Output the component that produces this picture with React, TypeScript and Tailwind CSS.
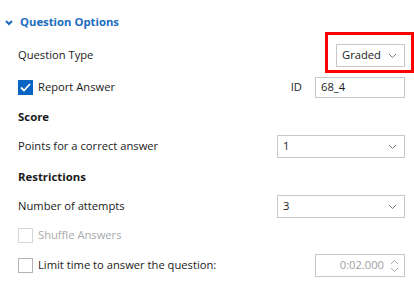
const font = { fontFamily: '"Open Sans", "Noto Sans", sans-serif' };

function SmallChevron() {
  return (
    <svg width="9" height="6" viewBox="0 0 9 6" className="text-[#777]">
      <path d="M1 1 L4.5 4.5 L8 1" fill="none" stroke="currentColor" strokeWidth="1" />
    </svg>
  );
}

function Select({ value, width }: { value: string; width: string }) {
  return (
    <div className={`${width} h-[23px] border border-[#c8c8c8] bg-white flex items-center justify-between pl-[5px] pr-[7px] text-[#1b1b1b]`}>
      <span>{value}</span>
      <SmallChevron />
    </div>
  );
}

function Check({ checked, disabled }: { checked?: boolean; disabled?: boolean }) {
  if (checked) {
    return (
      <div className="w-[15px] h-[15px] bg-[#0a64c2] flex items-center justify-center">
        <svg width="11" height="9" viewBox="0 0 11 9">
          <path d="M1 4.5 L4 7.5 L10 1" fill="none" stroke="white" strokeWidth="1.8" />
        </svg>
      </div>
    );
  }
  return (
    <div className={`w-[15px] h-[15px] border bg-white ${disabled ? "border-[#d6d6d6]" : "border-[#b4b4b4]"}`} />
  );
}

export default function App() {
  return (
    <div className="w-[414px] h-[302px] bg-white relative overflow-hidden" style={font}>
      {/* header */}
      <div className="h-[44px] flex items-center pl-[5px] pt-[1px]">
        <svg width="8" height="6" viewBox="0 0 8 6" className="text-[#1a6cc0] mr-[7px]">
          <path d="M1 1 L4 4 L7 1" fill="none" stroke="currentColor" strokeWidth="2" />
        </svg>
        <span className="text-[11.3px] font-bold text-[#1a6cc0]">Question Options</span>
      </div>

      <div className="pl-[18px] pr-[9px] text-[11.2px] text-[#1b1b1b]">
        <div className="h-[23px] flex items-center justify-between">
          <span>Question Type</span>
          <Select value="Graded" width="w-[69px]" />
        </div>

        <div className="h-[21px] mt-[10px] flex items-center justify-between">
          <div className="flex items-center gap-[5px]">
            <Check checked />
            <span>Report Answer</span>
          </div>
          <div className="flex items-center gap-[13px]">
            <span>ID</span>
            <div className="w-[90px] h-[21px] border border-[#c8c8c8] flex items-center pl-[5px]">68_4</div>
          </div>
        </div>

        <div className="h-[20px] mt-[9px] flex items-center font-bold text-[11.4px]">Score</div>

        <div className="h-[23px] mt-[8px] flex items-center justify-between">
          <span>Points for a correct answer</span>
          <Select value="1" width="w-[128px]" />
        </div>

        <div className="h-[20px] mt-[9px] flex items-center font-bold text-[11.4px]">Restrictions</div>

        <div className="h-[23px] mt-[8px] flex items-center justify-between">
          <span>Number of attempts</span>
          <Select value="3" width="w-[128px]" />
        </div>

        <div className="h-[15px] mt-[10px] flex items-center gap-[5px]">
          <Check disabled />
          <span className="text-[#a9a9a9]">Shuffle Answers</span>
        </div>

        <div className="h-[23px] mt-[11px] flex items-center justify-between">
          <div className="flex items-center gap-[5px]">
            <Check />
            <span>Limit time to answer the question:</span>
          </div>
          <div className="w-[90px] h-[23px] border border-[#c8c8c8] flex items-center justify-end pr-[5px] gap-[6px] text-[#a0a0a0]">
            <span>0:02.000</span>
            <svg width="9" height="14" viewBox="0 0 9 14" className="text-[#b0b0b0]">
              <path d="M1 5 L4.5 1.5 L8 5" fill="none" stroke="currentColor" strokeWidth="1" />
              <path d="M1 9 L4.5 12.5 L8 9" fill="none" stroke="currentColor" strokeWidth="1" />
            </svg>
          </div>
        </div>
      </div>

      {/* red highlight annotation */}
      <div className="absolute left-[325px] top-[32px] w-[89px] h-[41px] border-[3px] border-[#ff0000]" />
    </div>
  );
}
